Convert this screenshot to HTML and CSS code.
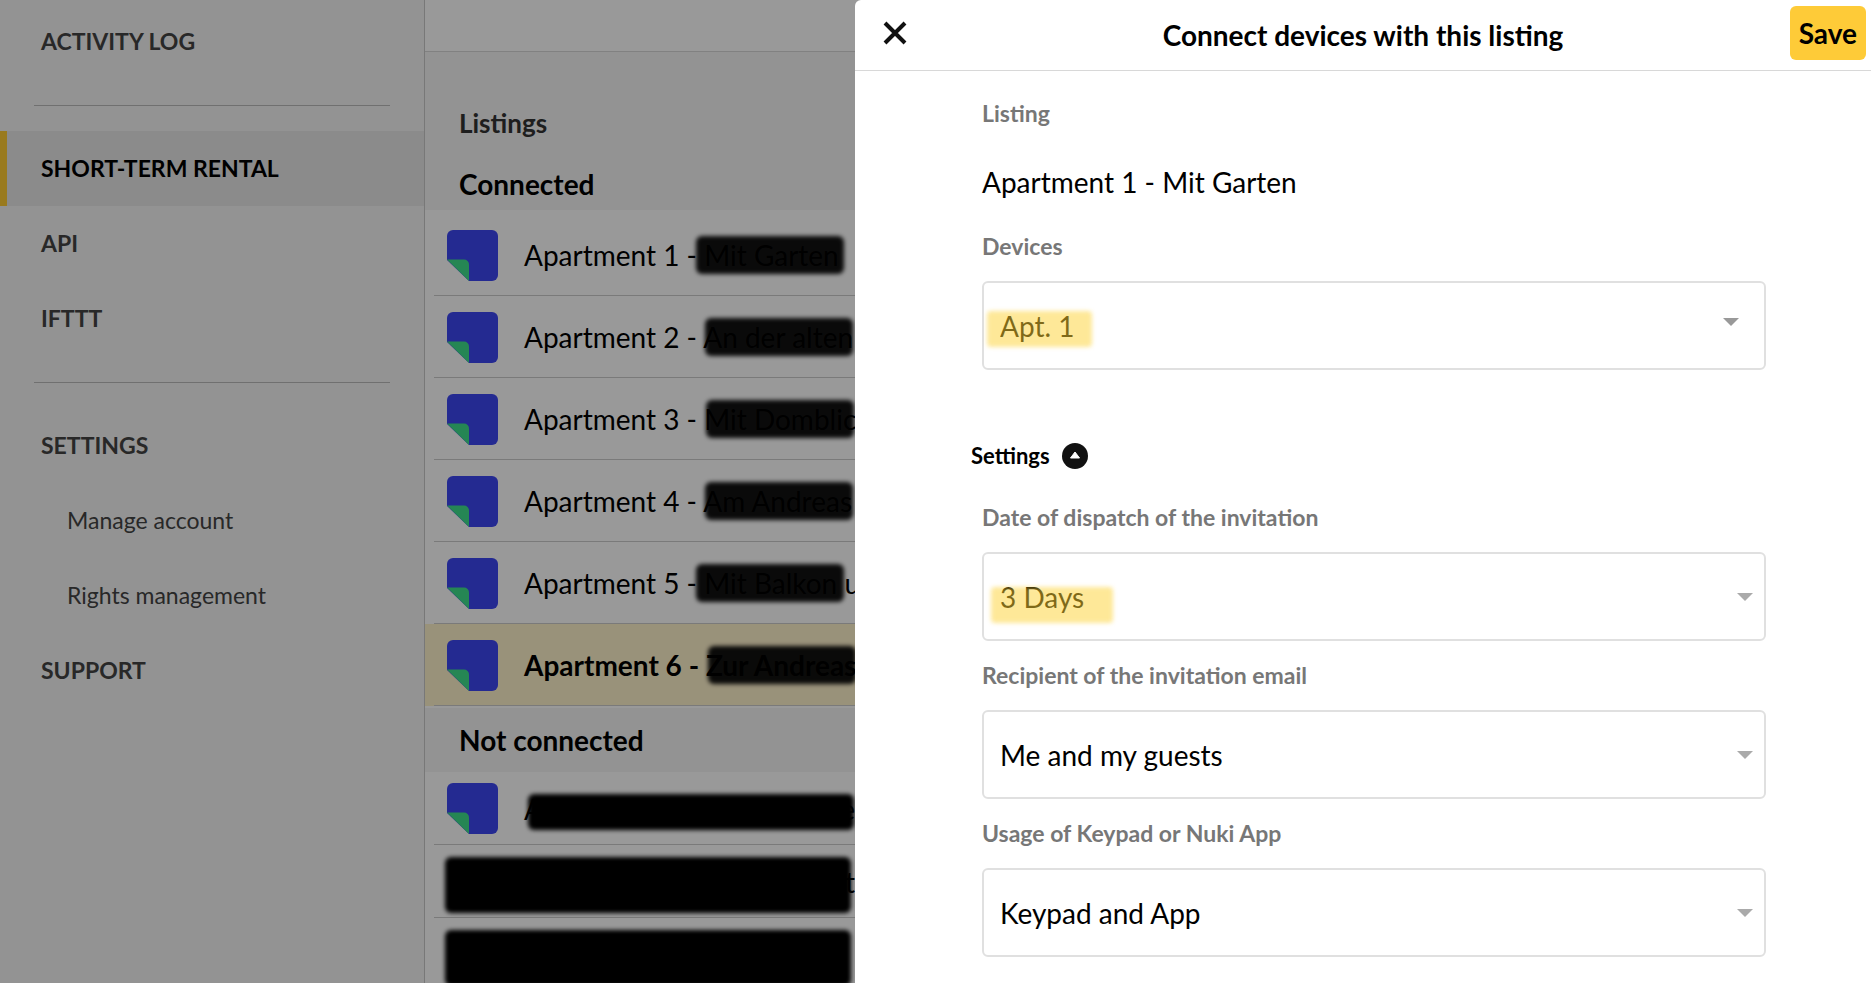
FILE: index.html
```html
<!DOCTYPE html>
<html lang="en">
<head>
    <meta charset="UTF-8">
    <title>Short-term rental</title>
    <link rel="stylesheet" href="styles.css">
</head>
<body>
    <!-- Folded square used for each listing -->
    <svg class="sprite" aria-hidden="true">
        <symbol id="listing-icon" viewBox="0 0 51 51">
            <path fill="#3d46f2" d="M6 0H45a6 6 0 0 1 6 6V45a6 6 0 0 1-6 6H22L0 30V6a6 6 0 0 1 6-6z"/>
            <path fill="#3fe08c" d="M0 29.500H17a5 5 0 0 1 5 5V51z"/>
        </symbol>
    </svg>
    <div class="page">
        <nav class="sidebar">
            <a class="nav-item" href="#">ACTIVITY LOG</a>
            <hr>
            <a class="nav-item active" href="#">SHORT-TERM RENTAL</a>
            <a class="nav-item" href="#">API</a>
            <a class="nav-item" href="#">IFTTT</a>
            <hr>
            <a class="nav-item" href="#">SETTINGS</a>
            <a class="nav-item sub" href="#">Manage account</a>
            <a class="nav-item sub" href="#">Rights management</a>
            <a class="nav-item" href="#">SUPPORT</a>
        </nav>

        <main class="listings">
            <div class="topbar"></div>
            <h2>Listings</h2>
            <h3>Connected</h3>
            <ul class="connected">
                <li><svg class="icon"><use href="#listing-icon"/></svg><span>Apartment 1 - <span class="redacted early">Mit Garten</span></span></li>
                <li><svg class="icon"><use href="#listing-icon"/></svg><span>Apartment 2 - <span class="redacted">An der alten</span></span></li>
                <li><svg class="icon"><use href="#listing-icon"/></svg><span>Apartment 3 - <span class="redacted">Mit Domblick</span></span></li>
                <li><svg class="icon"><use href="#listing-icon"/></svg><span>Apartment 4 - <span class="redacted">Am Andreas</span></span></li>
                <li><svg class="icon"><use href="#listing-icon"/></svg><span>Apartment 5 - <span class="redacted early">Mit Balkon u</span></span></li>
                <li class="selected"><svg class="icon"><use href="#listing-icon"/></svg><span>Apartment 6 - <span class="redacted">Zur Andreas</span></span></li>
            </ul>
            <h3>Not connected</h3>
            <ul class="not-connected">
                <li><svg class="icon"><use href="#listing-icon"/></svg><span class="hidden-name"><span>A</span><span>e</span></span></li>
                <li class="hidden-row"><span>t</span></li>
                <li class="hidden-row"></li>
            </ul>
        </main>

        <div class="overlay"></div>

        <form class="panel">
            <header>
                <button type="button" class="close" aria-label="Close">
                    <svg width="24" height="24" viewBox="0 0 24 24"><path d="M2 2L22 22M22 2L2 22" stroke="#111" stroke-width="4"/></svg>
                </button>
                <h1>Connect devices with this listing</h1>
                <button type="submit" class="save">Save</button>
            </header>
            <div class="fields">
                <div class="label">Listing</div>
                <div class="value">Apartment 1 - Mit Garten</div>
                <label class="label" for="devices">Devices</label>
                <div class="select devices">
                    <select id="devices"><option>Apt. 1</option></select>
                    <span class="marker"></span>
                </div>
                <button type="button" class="toggle">
                    Settings
                    <svg width="26" height="26" viewBox="0 0 26 26"><circle cx="13" cy="13" r="13" fill="#111"/><path d="M8.500 15L13 9L17.500 15z" fill="#fff" stroke="#fff" stroke-linejoin="round"/></svg>
                </button>
                <label class="label" for="dispatch">Date of dispatch of the invitation</label>
                <div class="select dispatch">
                    <select id="dispatch"><option>3 Days</option></select>
                    <span class="marker"></span>
                </div>
                <label class="label" for="recipient">Recipient of the invitation email</label>
                <div class="select">
                    <select id="recipient"><option>Me and my guests</option></select>
                </div>
                <label class="label" for="usage">Usage of Keypad or Nuki App</label>
                <div class="select">
                    <select id="usage"><option>Keypad and App</option></select>
                </div>
            </div>
        </form>
    </div>
</body>
</html>
```

FILE: styles.css
```css
* {
    box-sizing: border-box;
}

body {
    margin: 0;
    font-family: Lato, "Liberation Sans", sans-serif;
    font-size: 28px;
    color: #000;
    background: #fff;
}

button, select {
    font: inherit;
    color: inherit;
    border: 0;
    background: none;
    cursor: pointer;
}

.sprite {
    display: none;
}

.page {
    display: grid;
    grid-template-columns: 425px 430px 1fr;
    height: 100vh;
    overflow: hidden;
}

/* Sidebar */
.sidebar {
    padding-top: 4px;
    background: #f5f5f5;
    border-right: 1px solid #c8c8c8;
}

.sidebar hr {
    margin: 26px 34px 25px;
    border: 0;
    border-top: 1px solid #bbb;
}

.nav-item {
    display: block;
    padding-left: 41px;
    font-size: 23px;
    font-weight: 700;
    line-height: 75px;
    color: #444;
    text-decoration: none;
}

.nav-item.active {
    padding-left: 34px;
    border-left: 7px solid #ffcc33;
    background: #e8e8e8;
    color: #000;
}

.nav-item.sub {
    padding-left: 67px;
    font-weight: 400;
}

/* Listings column */
.listings {
    background: #f5f5f5;
    white-space: nowrap;
}

.topbar {
    height: 52px;
    background: #fff;
    border-bottom: 1px solid #d8d8d8;
}

h2, h3 {
    margin: 0;
    padding-left: 34px;
}

h2 {
    padding-top: 40px;
    font-size: 26px;
    line-height: 62px;
    color: #333;
}

h3 {
    height: 56px;
    font-size: 28px;
    line-height: 60px;
}

.connected + h3 {
    height: 64px;
    line-height: 64px;
}

ul {
    margin: 0;
    padding: 0;
    list-style: none;
    background: #fff;
}

.connected {
    padding: 4px 0 2px;
}

li {
    display: flex;
    align-items: center;
    gap: 26px;
    height: 82px;
    padding-left: 22px;
    background: linear-gradient(#ccc, #ccc) 9px 100% / 100% 1px no-repeat;
}

.not-connected li {
    height: 73px;
}

li.selected {
    background-color: #fff3cc;
    font-weight: 700;
}

.icon {
    flex: none;
    width: 51px;
    height: 51px;
}

/* Blacked out names */
.redacted, .hidden-name, .hidden-row {
    position: relative;
}

.redacted::after, .hidden-name::after, .hidden-row::after {
    content: "";
    position: absolute;
    top: -2px;
    left: 2px;
    width: 148px;
    height: 38px;
    border-radius: 6px;
    background: rgba(0, 0, 0, 0.93);
    filter: blur(2px);
}

.redacted.early::after {
    left: -8px;
}

.hidden-name {
    flex: 1;
    display: flex;
    justify-content: space-between;
}

.hidden-name::after {
    top: 2px;
    left: 4px;
    width: 326px;
    height: 36px;
    background: #000;
}

.not-connected .hidden-row {
    justify-content: flex-end;
}

.hidden-row::after {
    top: 12px;
    left: 20px;
    width: 406px;
    height: 56px;
    background: #000;
}

/* Dimmed background behind the panel */
.overlay {
    position: fixed;
    inset: 0;
    background: rgba(0, 0, 0, 0.4);
}

/* Panel */
.panel {
    position: relative;
    background: #fff;
    border-radius: 6px 0 0 0;
}

.panel header {
    display: grid;
    grid-template-columns: 1fr auto 1fr;
    align-items: center;
    height: 71px;
    padding: 0 5px 4px;
    border-bottom: 1px solid #d8d8d8;
}

.panel h1 {
    margin: 0;
    padding-top: 4px;
    font-size: 28px;
}

.close {
    display: flex;
    justify-self: start;
    margin-left: 18px;
    padding: 5px;
}

.save {
    justify-self: end;
    height: 54px;
    padding: 0 9px;
    border-radius: 6px;
    background: #fecb38;
    font-weight: 700;
}

.fields {
    padding: 8px 105px 24px 127px;
}

.label {
    display: block;
    font-size: 23px;
    font-weight: 700;
    line-height: 69px;
    color: #777;
}

.value {
    padding-top: 4px;
    line-height: 60px;
}

.select {
    position: relative;
}

.select::after {
    content: "";
    position: absolute;
    top: 41px;
    right: 13px;
    border: 8px solid transparent;
    border-top-color: #aaa;
    border-bottom: 0;
    pointer-events: none;
}

.devices::after {
    top: 37px;
    right: 27px;
    border-top-color: #999;
}

select {
    display: block;
    width: 100%;
    height: 89px;
    padding: 0 40px 0 16px;
    border: 2px solid #e0e0e0;
    border-radius: 6px;
    background: #fff;
    appearance: none;
}

/* Highlighter over the chosen value */
.marker {
    position: absolute;
    top: 30px;
    left: 5px;
    width: 105px;
    height: 36px;
    border-radius: 4px;
    background: rgba(253, 210, 50, 0.5);
    filter: blur(2px);
    pointer-events: none;
}

.dispatch .marker {
    top: 35px;
    left: 9px;
    width: 122px;
}

.toggle {
    display: flex;
    align-items: center;
    gap: 12px;
    margin: 62px 0 3px -11px;
    padding: 0;
    font-size: 22px;
    font-weight: 700;
    line-height: 48px;
}
```
